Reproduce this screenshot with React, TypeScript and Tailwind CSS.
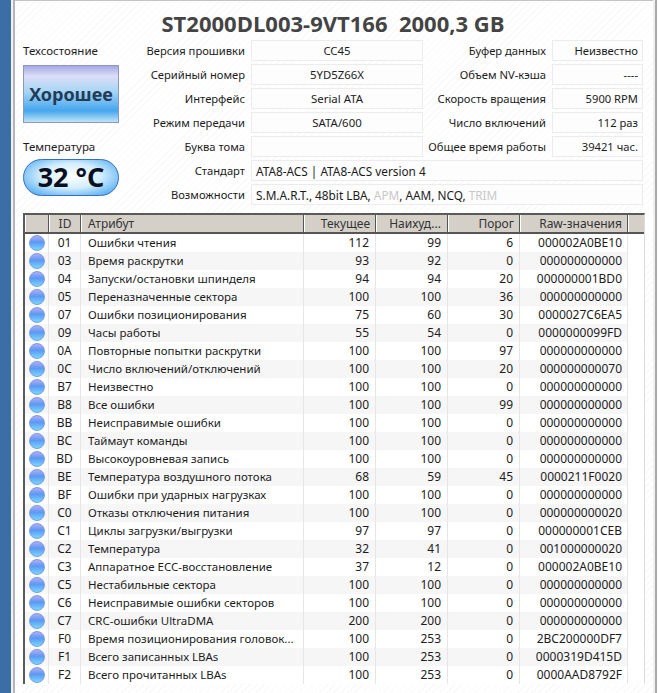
import React from 'react';

const rows: [string, string, string, string, string, string][] = [
  ['01', 'Ошибки чтения', '112', '99', '6', '000002A0BE10'],
  ['03', 'Время раскрутки', '93', '92', '0', '000000000000'],
  ['04', 'Запуски/остановки шпинделя', '94', '94', '20', '000000001BD0'],
  ['05', 'Переназначенные сектора', '100', '100', '36', '000000000000'],
  ['07', 'Ошибки позиционирования', '75', '60', '30', '0000027C6EA5'],
  ['09', 'Часы работы', '55', '54', '0', '0000000099FD'],
  ['0A', 'Повторные попытки раскрутки', '100', '100', '97', '000000000000'],
  ['0C', 'Число включений/отключений', '100', '100', '20', '000000000070'],
  ['B7', 'Неизвестно', '100', '100', '0', '000000000000'],
  ['B8', 'Все ошибки', '100', '100', '99', '000000000000'],
  ['BB', 'Неисправимые ошибки', '100', '100', '0', '000000000000'],
  ['BC', 'Таймаут команды', '100', '100', '0', '000000000000'],
  ['BD', 'Высокоуровневая запись', '100', '100', '0', '000000000000'],
  ['BE', 'Температура воздушного потока', '68', '59', '45', '0000211F0020'],
  ['BF', 'Ошибки при ударных нагрузках', '100', '100', '0', '000000000000'],
  ['C0', 'Отказы отключения питания', '100', '100', '0', '000000000020'],
  ['C1', 'Циклы загрузки/выгрузки', '97', '97', '0', '000000001CEB'],
  ['C2', 'Температура', '32', '41', '0', '001000000020'],
  ['C3', 'Аппаратное ECC-восстановление', '37', '12', '0', '000002A0BE10'],
  ['C5', 'Нестабильные сектора', '100', '100', '0', '000000000000'],
  ['C6', 'Неисправимые ошибки секторов', '100', '100', '0', '000000000000'],
  ['C7', 'CRC-ошибки UltraDMA', '200', '200', '0', '000000000000'],
  ['F0', 'Время позиционирования головок...', '100', '253', '0', '2BC200000DF7'],
  ['F1', 'Всего записанных LBAs', '100', '253', '0', '0000319D415D'],
  ['F2', 'Всего прочитанных LBAs', '100', '253', '0', '0000AAD8792F'],
];

const Field = ({ label, value, right }: { label: string; value: string; right?: boolean }) => (
  <div className="flex h-[24px] items-start">
    <div className={`${right ? 'w-[123px]' : 'w-[126px]'} h-[21px] leading-[21px] text-right text-[11.2px] whitespace-nowrap`}>{label}</div>
    <div
      className={`${right ? 'w-[91px] ml-[6px] text-right pr-[4px] text-[11.2px]' : 'w-[172px] ml-[6px] text-center text-[11.4px]'} h-[21px] leading-[20px] border border-[#ececec] bg-[#fdfdfd]`}
    >
      {value}
    </div>
  </div>
);

const WideField = ({ label, children }: { label: string; children: React.ReactNode }) => (
  <div className="flex h-[24px] items-start">
    <div className="w-[126px] h-[21px] leading-[21px] text-right text-[11.2px]">{label}</div>
    <div className="w-[392px] ml-[6px] h-[21px] leading-[20px] border border-[#ececec] bg-[#fdfdfd] pl-[4px] text-[11.8px]">
      {children}
    </div>
  </div>
);

const HeaderCell = ({ className, children }: { className: string; children?: React.ReactNode }) => (
  <div className={`${className} h-full leading-[18px] border-r border-r-[#555] border-l border-l-white`}>{children}</div>
);

export default function App() {
  return (
    <div className="flex w-[659px] h-[693px] overflow-hidden bg-white text-[#1c1c1c] text-[12px] font-['Noto_Sans','DejaVu_Sans',sans-serif]">
      <div className="w-[11px] shrink-0 bg-[#3b6ea5]" />
      <div className="w-[2px] shrink-0 bg-[#eef2f6]" />
      <div className="w-[2px] shrink-0 bg-[#b5b5b5]" />
      <div className="w-[638px] shrink-0 pl-[8px] border-t border-[#c4c4c4] bg-[repeating-linear-gradient(135deg,#ffffff_0,#ffffff_4px,#f9f9f9_4px,#f9f9f9_5px)]">
        <div className="h-[39px] ml-[-8px] w-[636px] text-center text-[22px] font-bold leading-[45px] text-[#444] whitespace-pre font-['Open_Sans',sans-serif]">
          ST2000DL003-9VT166  2000,3 GB
        </div>
        <div className="flex h-[173px]">
          <div className="w-[96px] shrink-0">
            <div className="h-[25px] leading-[22px] text-[11.5px]">Техсостояние</div>
            <div className="h-[58px] border border-[#8f97bb] flex items-center justify-center text-[18px] font-bold text-[#243a55] bg-[linear-gradient(#a4a9e6,#dcdef7_18%,#a8d6f6_45%,#45a6ee_80%,#bfe5f8)]">
              Хорошее
            </div>
            <div className="h-[24px] mt-[12px] leading-[24px] text-[11.5px]">Температура</div>
            <div className="h-[37px] rounded-full border border-[#3a6cc0] flex items-center justify-center text-[27px] font-bold text-[#0a0f20] bg-[radial-gradient(ellipse_at_50%_45%,#ffffff_0,#d4eefd_45%,#5cb2f2_85%,#3f86dc_100%)]">
              32 °C
            </div>
          </div>
          <div className="flex-1 flex flex-col">
            <div className="flex">
              <div className="flex flex-col">
                <Field label="Версия прошивки" value="CC45" />
                <Field label="Серийный номер" value="5YD5Z66X" />
                <Field label="Интерфейс" value="Serial ATA" />
                <Field label="Режим передачи" value="SATA/600" />
                <Field label="Буква тома" value="" />
              </div>
              <div className="flex flex-col">
                <Field right label="Буфер данных" value="Неизвестно" />
                <Field right label="Объем NV-кэша" value="----" />
                <Field right label="Скорость вращения" value="5900 RPM" />
                <Field right label="Число включений" value="112 раз" />
                <Field right label="Общее время работы" value="39421 час." />
              </div>
            </div>
            <WideField label="Стандарт">ATA8-ACS | ATA8-ACS version 4</WideField>
            <WideField label="Возможности">
              S.M.A.R.T., 48bit LBA, <span className="text-[#c8c8c8]">APM</span>, AAM, NCQ,{' '}
              <span className="text-[#c8c8c8]">TRIM</span>
            </WideField>
          </div>
        </div>
        <div className="w-[622px] h-[471px] border-t-2 border-l-2 border-t-[#5a5a5a] border-l-[#5a5a5a] border-r border-r-[#dcdcdc] bg-white">
          <div className="flex h-[19px] bg-[#d4d0c8] border-b-2 border-b-[#555] text-[#333]">
            <HeaderCell className="w-[24px]" />
            <HeaderCell className="w-[32px] text-center">ID</HeaderCell>
            <HeaderCell className="w-[223px] pl-[6px]">Атрибут</HeaderCell>
            <HeaderCell className="w-[72px] text-right pr-[5px]">Текущее</HeaderCell>
            <HeaderCell className="w-[72px] text-right pr-[6px]">Наихуд...</HeaderCell>
            <HeaderCell className="w-[72px] text-right pr-[5px]">Порог</HeaderCell>
            <HeaderCell className="w-[108px] text-right pr-[5px]">Raw-значения</HeaderCell>
            <div className="flex-1 border-l border-l-white" />
          </div>
          {rows.map((r, i) => (
            <div key={r[0]} className={`flex w-[603px] h-[18px] leading-[18px] ${i % 2 ? 'bg-[#f6f6f6]' : 'bg-white'}`}>
              <div className="w-[24px] flex items-center justify-center border-r border-r-[#e6e6e6]">
                <div className="w-[16px] h-[16px] rounded-full border border-[#7a9ee2] bg-[linear-gradient(#b4acf4,#5a98f4_45%,#7ad6ff)]" />
              </div>
              <div className="w-[32px] text-center border-r border-r-[#e6e6e6]">{r[0]}</div>
              <div className="w-[223px] pl-[7px] whitespace-nowrap overflow-hidden border-r border-r-[#e6e6e6] text-[11.5px]">{r[1]}</div>
              <div className="w-[72px] text-right pr-[6px] border-r border-r-[#e6e6e6]">{r[2]}</div>
              <div className="w-[72px] text-right pr-[6px] border-r border-r-[#e6e6e6]">{r[3]}</div>
              <div className="w-[72px] text-right pr-[6px] border-r border-r-[#e6e6e6]">{r[4]}</div>
              <div className="w-[108px] text-right pr-[5px] border-r border-r-[#e6e6e6]">{r[5]}</div>
            </div>
          ))}
        </div>
      </div>
      <div className="w-[2px] shrink-0 bg-[#f0f0f0]" />
      <div className="w-[2px] shrink-0 bg-[#aaaaaa]" />
    </div>
  );
}
